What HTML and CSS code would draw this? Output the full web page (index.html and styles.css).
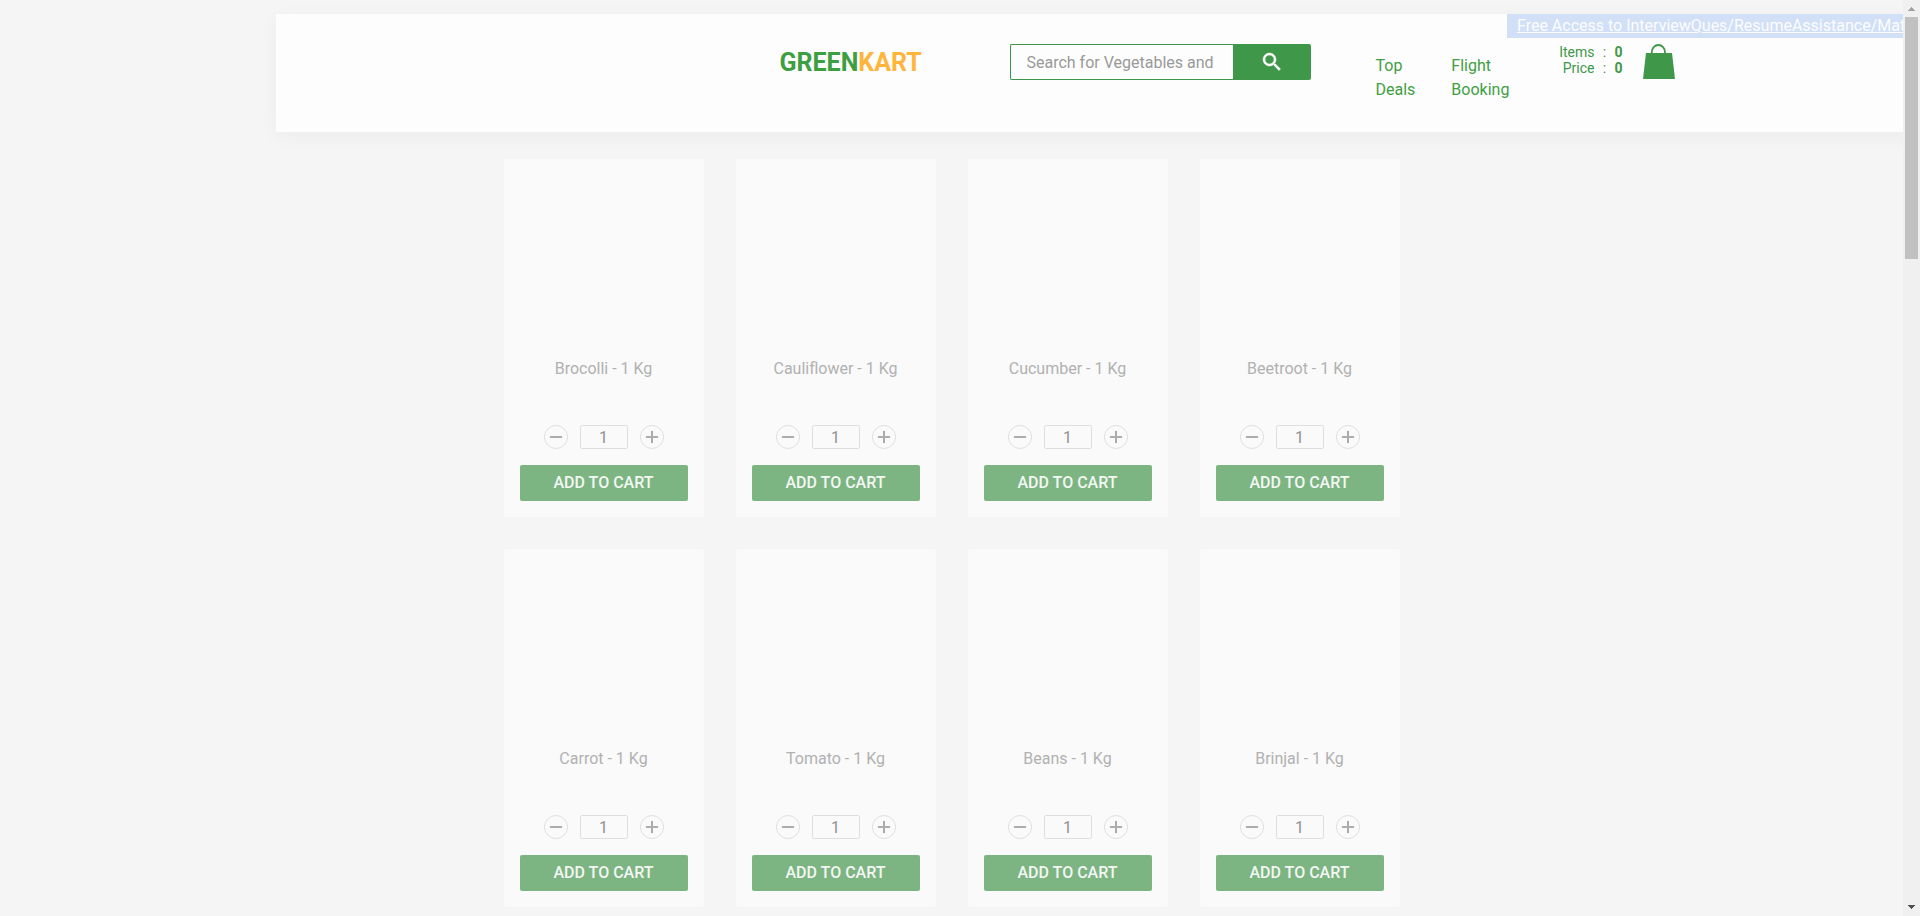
FILE: index.html
```html
<!DOCTYPE html>
<html lang="en">
<head>
<meta charset="utf-8">
<title>GreenKart</title>
<link rel="stylesheet" href="styles.css">
</head>
<body>
<div class="page">
  <header class="header">
    <a class="promo" href="#">Free Access to InterviewQues/ResumeAssistance/Material</a>
    <div class="container header-row">
      <div class="brand">GREEN<span class="brand-accent">KART</span></div>
      <form class="search">
        <input class="search-input" type="text" aria-label="Search" placeholder="Search for Vegetables and Fruits">
        <button class="search-button" type="button" aria-label="Search">
          <svg width="24" height="24" viewBox="0 0 24 24" fill="#fff" stroke="#fff" stroke-width=".5"><path d="M15.5 14h-.79l-.28-.27A6.471 6.471 0 0 0 16 9.5 6.5 6.5 0 1 0 9.5 16c1.61 0 3.09-.59 4.23-1.57l.27.28v.79l5 4.99L20.49 19l-4.99-5zm-6 0C7.01 14 5 11.99 5 9.5S7.01 5 9.5 5 14 7.01 14 9.5 11.99 14 9.5 14z"/></svg>
        </button>
      </form>
      <nav class="nav">
        <a class="nav-link" href="#">Top Deals</a>
        <a class="nav-link" href="#">Flight Booking</a>
      </nav>
      <div class="cart">
        <table class="cart-info">
          <tr><td>Items</td><td class="colon">:</td><td class="amount">0</td></tr>
          <tr><td>Price</td><td class="colon">:</td><td class="amount">0</td></tr>
        </table>
        <button class="bag" type="button" aria-label="Cart">
          <svg width="32" height="36" viewBox="0 0 32 36"><path d="M3 9h26l3 26H0z" fill="#3f9849"/><path d="M8.800 10V8.200a6.600 7.200 0 0 1 13.200 0V10" fill="none" stroke="#3f9849" stroke-width="1.800"/></svg>
        </button>
      </div>
    </div>
  </header>
  <main class="container products" id="products"></main>
</div>
<div class="scrollbar" aria-hidden="true">
  <svg class="arrow" width="17" height="17" viewBox="0 0 17 17"><path d="M5 11V10h1V9h1V8h1V7h1v1h1v1h1v1h1v1z" fill="#a3a3a3"/></svg>
  <div class="thumb"></div>
  <svg class="arrow" width="17" height="17" viewBox="0 0 17 17"><path d="M5 6v1h1v1h1v1h1v1h1V9h1V8h1V7h1V6z" fill="#505050"/></svg>
</div>
<script src="products.js"></script>
</body>
</html>
```

FILE: styles.css
```css
* { box-sizing: border-box; }

body {
  display: flex;
  height: 100vh;
  margin: 0;
  overflow: hidden;
  background: #f5f5f5;
  font-family: Roboto, sans-serif;
  font-size: 16px;
}

button, input { margin: 0; padding: 0; font: inherit; }
a { text-decoration: none; }
svg { display: block; }

.page { flex: 1; min-width: 0; overflow: hidden; }
.container { width: 896px; margin: 0 auto; }

.header {
  display: flex;
  flex-direction: column;
  gap: 6px;
  width: 100%;
  margin: 14px 0 0 276px;
  padding-bottom: 30px;
  background: #fdfdfd;
  box-shadow: 0 5px 20px rgba(0, 0, 0, .04);
}

.promo {
  align-self: flex-start;
  margin-left: 1231px;
  padding: 0 10px;
  background: #d1dff7;
  color: #fdfdfd;
  line-height: 24px;
  white-space: nowrap;
  text-decoration: underline;
}

.header-row { display: flex; align-items: flex-start; padding-right: 1px; }

.brand { width: 230px; color: #3c9f40; font-size: 25px; font-weight: 700; line-height: 38px; }
.brand-accent { color: #ffb53a; }

.search { display: flex; width: 301px; height: 36px; }
.search-input {
  flex: 1;
  min-width: 0;
  padding: 0 16px;
  border: 1px solid #3f9849;
  border-right: 0;
  border-radius: 2px 0 0 2px;
  background: #fdfdfd;
  color: #555;
  outline: 0;
}
.search-input::placeholder { color: #999; }
.search-button {
  display: grid;
  place-items: center;
  width: 78px;
  border: 0;
  border-radius: 0 2px 2px 0;
  background: #3f9849;
}

.nav { display: flex; gap: 36px; margin: 10px 0 0 65px; }
.nav-link { width: min-content; color: #3f9f43; line-height: 24px; }

.cart { display: flex; gap: 20px; margin-left: auto; }
.cart-info {
  height: 32px;
  border-collapse: collapse;
  color: #3f9849;
  font-size: 14px;
  line-height: 16px;
  text-align: right;
}
.cart-info td { padding: 0; }
.cart-info .colon { width: 20px; text-align: center; }
.cart-info .amount { font-weight: 700; }
.bag { border: 0; background: none; }

.products { display: grid; grid-template-columns: repeat(4, 200px); gap: 32px; padding-top: 27px; }

.product { padding-bottom: 16px; border-radius: 2px; background: #fafafa; text-align: center; }
.picture { height: 180px; }
.name { margin: 17px 0 43px; color: #b1b1b1; font-size: 16px; font-weight: 400; line-height: 26px; }

.stepper { display: flex; justify-content: center; gap: 12px; }
.step {
  display: grid;
  place-items: center;
  width: 24px;
  height: 24px;
  border: 1px solid #dfdfdf;
  border-radius: 50%;
  background: none;
}
.quantity {
  width: 48px;
  height: 24px;
  padding: 0;
  border: 1px solid #dfdfdf;
  border-radius: 2px;
  background: none;
  color: #929292;
  text-align: center;
  appearance: textfield;
}
.quantity::-webkit-inner-spin-button { display: none; }

.add {
  width: 168px;
  height: 36px;
  margin-top: 16px;
  border: 0;
  border-radius: 2px;
  background: #7cb482;
  color: #f3f7f3;
  font-weight: 500;
  line-height: 36px;
}

.scrollbar { display: flex; flex-direction: column; z-index: 1; width: 17px; background: #f0f0f0; }
.thumb { width: 13px; height: 242px; margin: 0 2px auto; background: #c1c1c1; }
```

FILE: products.js
```js
const names = ["Brocolli", "Cauliflower", "Cucumber", "Beetroot", "Carrot", "Tomato", "Beans", "Brinjal"];

document.getElementById("products").innerHTML = names.map((name) => `
  <article class="product">
    <div class="picture"></div>
    <h2 class="name">${name} - 1 Kg</h2>
    <div class="stepper">
      <button class="step" type="button" aria-label="Less ${name}">
        <svg width="12" height="12" viewBox="0 0 12 12"><path d="M0 6h12" stroke="#acacac" stroke-width="2"/></svg>
      </button>
      <input class="quantity" type="number" value="1" aria-label="Quantity of ${name}">
      <button class="step" type="button" aria-label="More ${name}">
        <svg width="12" height="12" viewBox="0 0 12 12"><path d="M0 6h12M6 0v12" stroke="#acacac" stroke-width="2"/></svg>
      </button>
    </div>
    <button class="add" type="button">ADD TO CART</button>
  </article>`).join("");
```
